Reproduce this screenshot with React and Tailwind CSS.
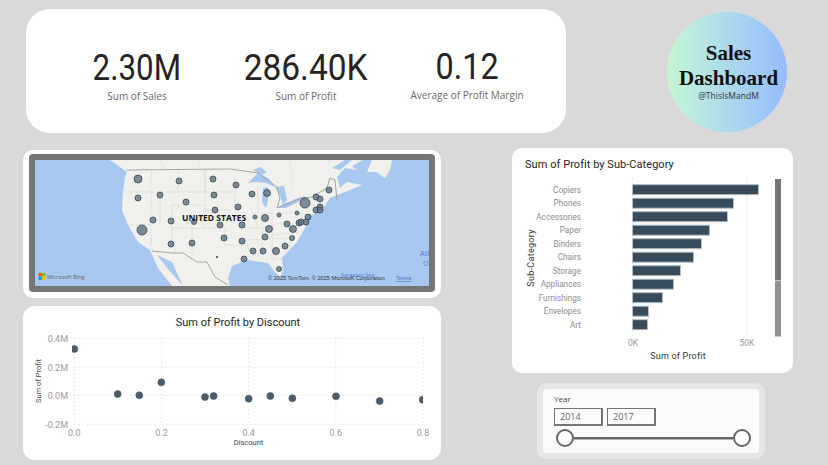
const din = "font-['Roboto','Liberation_Sans',sans-serif]";
const segoe = "font-['Open_Sans','Liberation_Sans',sans-serif]";

function Kpi({ value, label, width, squeeze, lift }) {
  return (
    <div className={`flex flex-col items-center ${width} ${lift}`}>
      <div className={`${din} text-[36px] leading-[30px] h-[30px] whitespace-nowrap text-[#252423] ${squeeze}`}>{value}</div>
      <div className={`${segoe} text-[10px] leading-[14px] mt-[6px] text-[#6b6967]`}>{label}</div>
    </div>
  );
}

const dots = [
  [138,179,4],[179,181,3],[213,179,3],[138,198,3],[160,195,3],[186,202,3],[214,195,3],[215,210,3],[153,220,3],[171,221,3],[194,222,2.5],[220,225,3],[142,230,5],[224,238,3],[171,244,3],[192,243,3],
  [236,185,3],[252,194,3],[267,193,3.5],[238,207,3],[255,217,2],[265,218,3.5],[279,215,2],[242,225,3],[269,229,3.5],[287,224,3],[297,213,2],[305,203,5],[316,197,3],[320,199,3],[329,190,3],[316,210,3],[320,207,3],[320,210,3],[308,217,3],[306,222,3],[299,223,3],[301,222,3],[293,229,3.5],[292,238,2.5],[265,237,3],[242,241,3],[285,246,3],[276,251,3.5],[263,251,3],[253,251,3],[244,259,3],[279,269,2.5],
];

const stateLines = [
  "M123 192 L150 192 L152 170", "M152 192 L150 224", "M150 192 L178 192 L178 170", "M160 192 L160 224", "M128 225 L150 224 L152 250",
  "M172 205 L172 240 L176 253", "M172 205 L205 205", "M178 192 L205 192 L205 170", "M205 170 L205 228", "M192 222 L192 258", "M172 228 L225 228",
  "M205 192 L235 192", "M205 210 L232 210", "M225 228 L225 245 L248 245 L250 260", "M235 175 L235 210 L245 228", "M245 228 L262 228 L262 258", "M262 228 L285 222", "M250 205 L258 228",
  "M258 187 L258 213 L272 213", "M272 213 L272 235 L300 232", "M245 240 L290 238", "M272 235 L272 260", "M272 260 L282 258 L292 240", "M283 213 L300 213 L303 222", "M300 205 L320 205", "M320 205 L320 195 L327 188",
];

function MapVisual() {
  return (
    <svg viewBox="35 160 394 126" className="block w-full h-full">
      <rect x="35" y="160" width="394" height="126" fill="#a8c8f0" />
      <path d="M110 160 L127 172 L125 177 L123 192 L122 210 L128 225 L138 242 L150 250 L158 268 L172 286 L183 286 L167 268 L157 255 L172 262 L183 286 L230 286 L228 278 L232 266 L247 260 L268 263 L275 272 L280 277 L283 270 L282 258 L297 242 L305 228 L308 217 L322 210 L330 198 L345 192 L362 185 L347 182 L340 188 L337 177 L345 168 L357 170 L352 166 L363 160 Z" fill="#f0f0ed" />
      <path d="M372 160 L392 160 L390 170 L385 178 L376 172 L367 172 Z" fill="#f0f0ed" />
      <g fill="#a8c8f0">
        <path d="M248 183 L258 173 L268 178 L275 187 L266 183 L256 182 Z" />
        <path d="M253 170 L260 167 L267 172 L262 175 Z" />
        <path d="M263 188 L268 187 L268 200 L266 208 L262 202 Z" />
        <path d="M275 187 L284 186 L287 200 L283 205 L280 195 Z" />
        <path d="M278 208 L285 203 L302 198 L298 202 L286 208 Z" />
        <path d="M292 200 L305 196 L305 199 L296 202 Z" />
        <path d="M332 168 L345 160 L352 160 L340 170 Z" />
      </g>
      <g fill="none" stroke="#bcbcb8" strokeWidth="0.5" strokeDasharray="1.5 1.2">
        {stateLines.map((d) => <path key={d} d={d} />)}
      </g>
      <path d="M127 170 L230 169 L258 173 L277 187 L280 198 L277 208 L302 198 L312 197 L327 188 L330 178 L335 180 L337 200" fill="none" stroke="#9c9c98" strokeWidth="0.9" />
      <path d="M152 251 L172 253 L183 253 L197 262 L207 262 L215 277 L228 285" fill="none" stroke="#9c9c98" strokeWidth="0.9" />
      <g fill="none" stroke="#d0d0cb" strokeWidth="0.5" strokeDasharray="1.5 1.2">
        <path d="M160 160 L165 170 M200 160 L198 170 M290 160 L293 190 M330 160 L325 172" />
      </g>
      {dots.map(([x, y, r]) => (
        <circle key={`${x}-${y}`} cx={x} cy={y} r={r} fill="#5e717e" fillOpacity="0.8" stroke="#374955" strokeWidth="0.8" />
      ))}
      <circle cx="217" cy="257" r="0.9" fill="#222" />
      <text x="182" y="221" fontFamily="Open Sans, sans-serif" fontWeight="700" fontSize="8.5" fill="#111">UNITED STATES</text>
      <text x="420" y="256" fontFamily="Open Sans, sans-serif" fontSize="7.5" fill="#4a78d0">Atl</text>
      <text x="423" y="266" fontFamily="Open Sans, sans-serif" fontSize="7.5" fill="#4a78d0">O</text>
      <text x="341" y="277" fontFamily="Open Sans, sans-serif" fontSize="5.5" fill="#4a78d0">Sargasso Sea</text>
      <text x="268" y="280" fontFamily="Liberation Sans, sans-serif" fontSize="5.6" fill="#333">© 2025 TomTom, © 2025 Microsoft Corporation</text>
      <text x="396" y="280" fontFamily="Liberation Sans, sans-serif" fontSize="5.6" fill="#4a6fc0" textDecoration="underline">Terms</text>
      <rect x="38.5" y="273" width="3.4" height="3.4" fill="#f25022" />
      <rect x="42" y="273" width="3.4" height="3.4" fill="#7fba00" />
      <rect x="38.5" y="276.6" width="3.4" height="3.4" fill="#00a4ef" />
      <rect x="42" y="276.6" width="3.4" height="3.4" fill="#ffb900" />
      <text x="47" y="279.3" fontFamily="Open Sans, sans-serif" fontSize="5.6" fill="#666">Microsoft Bing</text>
    </svg>
  );
}

const pts = [[163,147],[293,282],[358,286],[424,247],[555,291],[581,288],[686,296],[751,288],[817,295],[948,289],[1079,303],[1208,299]];

function Scatter() {
  const X = (v) => v / 3 + 20;
  const Y = (v) => v / 3 + 300;
  const xs = [[0,"0.0"],[0.2,"0.2"],[0.4,"0.4"],[0.6,"0.6"],[0.8,"0.8"]];
  const ys = [[338.3,"0.4M"],[367,"0.2M"],[395.3,"0.0M"],[424.3,"-0.2M"]];
  return (
    <svg viewBox="23 330 418 130" className="block w-[418px] h-[130px]">
      <defs><clipPath id="sc"><rect x="72" y="336" width="351" height="90" /></clipPath></defs>
      {ys.map(([y, t]) => (
        <g key={t}>
          <line x1="74.3" x2="423" y1={y} y2={y} stroke="#d8d8d8" strokeWidth="1" strokeDasharray="1 3" />
          <text x="68" y={y + 3.5} textAnchor="end" fontFamily="Roboto, sans-serif" fontSize="9" fill="#9a9a9a">{t}</text>
        </g>
      ))}
      {xs.map(([v, t]) => {
        const x = 74.3 + v * 435.9;
        return (
          <g key={t}>
            <line x1={x} x2={x} y1="338" y2="424" stroke="#d8d8d8" strokeWidth="1" strokeDasharray="1 3" />
            <text x={x} y="436" textAnchor="middle" fontFamily="Roboto, sans-serif" fontSize="9" fill="#9a9a9a">{t}</text>
          </g>
        );
      })}
      <g clipPath="url(#sc)">
        {pts.map(([x, y]) => <circle key={x} cx={X(x)} cy={Y(y)} r="3.5" fill="#4a5b69" stroke="#4a5b69" strokeWidth="0.6" />)}
      </g>
      <text x="248.5" y="445" textAnchor="middle" fontFamily="Roboto, sans-serif" fontSize="7.5" fill="#444">Discount</text>
      <text transform="translate(41 381) rotate(-90)" textAnchor="middle" fontFamily="Roboto, sans-serif" fontSize="7.5" fill="#444">Sum of Profit</text>
    </svg>
  );
}

const bars = [["Copiers",126],["Phones",101],["Accessories",95],["Paper",77],["Binders",69],["Chairs",61],["Storage",48],["Appliances",41],["Furnishings",30],["Envelopes",16],["Art",15]];

function BarChart() {
  return (
    <svg viewBox="512 172 281 201" className="block w-[281px] h-[201px]">
      <line x1="632.3" x2="632.3" y1="179" y2="336" stroke="#d8d8d8" strokeDasharray="1 3" />
      <line x1="746.7" x2="746.7" y1="179" y2="336" stroke="#d8d8d8" strokeDasharray="1 3" />
      {bars.map(([name, w], i) => {
        const y = 184.7 + i * 13.5;
        return (
          <g key={name}>
            <text x="581" y={y + 8} textAnchor="end" fontFamily="Roboto, sans-serif" fontSize="8.2" fill="#8c8c8c">{name}</text>
            <rect x="632.5" y={y} width={w} height="10" fill="#374b5a" stroke="#b4bec5" strokeWidth="1" />
          </g>
        );
      })}
      <rect x="775" y="179" width="6" height="101" fill="#757575" />
      <rect x="775" y="280.5" width="6" height="56" fill="#929292" />
      <text x="633" y="346" textAnchor="middle" fontFamily="Roboto, sans-serif" fontSize="8.5" fill="#9a9a9a">0K</text>
      <text x="747" y="346" textAnchor="middle" fontFamily="Roboto, sans-serif" fontSize="8.5" fill="#9a9a9a">50K</text>
      <text x="678" y="359" textAnchor="middle" fontFamily="Roboto, sans-serif" fontSize="9" letterSpacing="0.2" fill="#333">Sum of Profit</text>
      <text transform="translate(534 258) rotate(-90)" textAnchor="middle" fontFamily="Roboto, sans-serif" fontSize="9" letterSpacing="0.3" fill="#333">Sub-Category</text>
    </svg>
  );
}

function YearBox({ children }) {
  return (
    <div className={`${segoe} w-[49px] h-[18px] border-2 border-t border-l border-[#757575] pl-[5px] text-[9px] leading-[15px] text-[#666]`}>{children}</div>
  );
}

export default function App() {
  return (
    <div className="w-[828px] h-[465px] overflow-hidden bg-[#d9d9d9]">
      <div className="flex h-[148px] pt-[9px] pl-[26px]">
        <div className="flex w-[540px] h-[124px] items-center pl-[31px] pt-[14px] bg-white rounded-[24px]">
          <Kpi value="2.30M" label="Sum of Sales" width="w-[160px]" squeeze="scale-x-[0.87]" lift="" />
          <Kpi value="286.40K" label="Sum of Profit" width="w-[178px]" squeeze="scale-x-[0.93]" lift="" />
          <Kpi value="0.12" label="Average of Profit Margin" width="w-[144px]" squeeze="scale-x-[0.9]" lift="mb-[2px]" />
        </div>
        <div className="ml-[101px] mt-[3px] flex flex-col items-center w-[120px] h-[120px] pt-[29px] pl-[3px] rounded-full bg-gradient-to-r from-[#c6f7d4] to-[#95bbfd]">
          <div className="font-['Liberation_Serif',serif] font-bold text-[21px] leading-[24.5px] text-[#111] text-center">Sales<br />Dashboard</div>
          <div className={`${segoe} text-[8.5px] leading-[12px] text-[#333]`}>@ThisIsMandM</div>
        </div>
      </div>
      <div className="flex pl-[23px]">
        <div className="flex flex-col w-[418px] mt-[2px] gap-[8px]">
          <div className="h-[148px] p-[4px_6px_6px] bg-white rounded-[10px]">
            <div className="h-[138px] border-[6px] border-[#757575] rounded-[4px] overflow-hidden">
              <MapVisual />
            </div>
          </div>
          <div className="h-[154px] bg-white rounded-[12px]">
            <div className={`${din} h-[24px] pt-[9px] pl-[12px] text-center text-[11px] leading-[15px] text-[#252423]`}>Sum of Profit by Discount</div>
            <Scatter />
          </div>
        </div>
        <div className="ml-[71px] flex flex-col w-[281px]">
          <div className="h-[225px] bg-white rounded-[10px]">
            <div className={`${din} h-[24px] pl-[13px] pt-[9px] text-[11px] leading-[15px] tracking-[0.05px] text-[#252423]`}>Sum of Profit by Sub-Category</div>
            <BarChart />
          </div>
          <div className="ml-[25px] mt-[10px] w-[228px] h-[76px] p-[6px] bg-[#e6e6e6] rounded-[10px]">
            <div className="h-[64px] bg-[#fbfbfb] rounded-[4px] pl-[11px] pt-[5px]">
              <div className={`${segoe} text-[8px] leading-[10px] text-[#444]`}>Year</div>
              <div className="flex gap-[4px] mt-[4px]">
                <YearBox>2014</YearBox>
                <YearBox>2017</YearBox>
              </div>
              <div className="flex items-center w-[195px] ml-[2px] mt-[3px]">
                <div className="w-[18px] h-[18px] shrink-0 rounded-full bg-white border-2 border-[#666]" />
                <div className="flex-1 h-[3px] bg-[#666] border-b border-[#b5b5b5]" />
                <div className="w-[18px] h-[18px] shrink-0 rounded-full bg-white border-2 border-[#666]" />
              </div>
            </div>
          </div>
        </div>
      </div>
    </div>
  );
}
